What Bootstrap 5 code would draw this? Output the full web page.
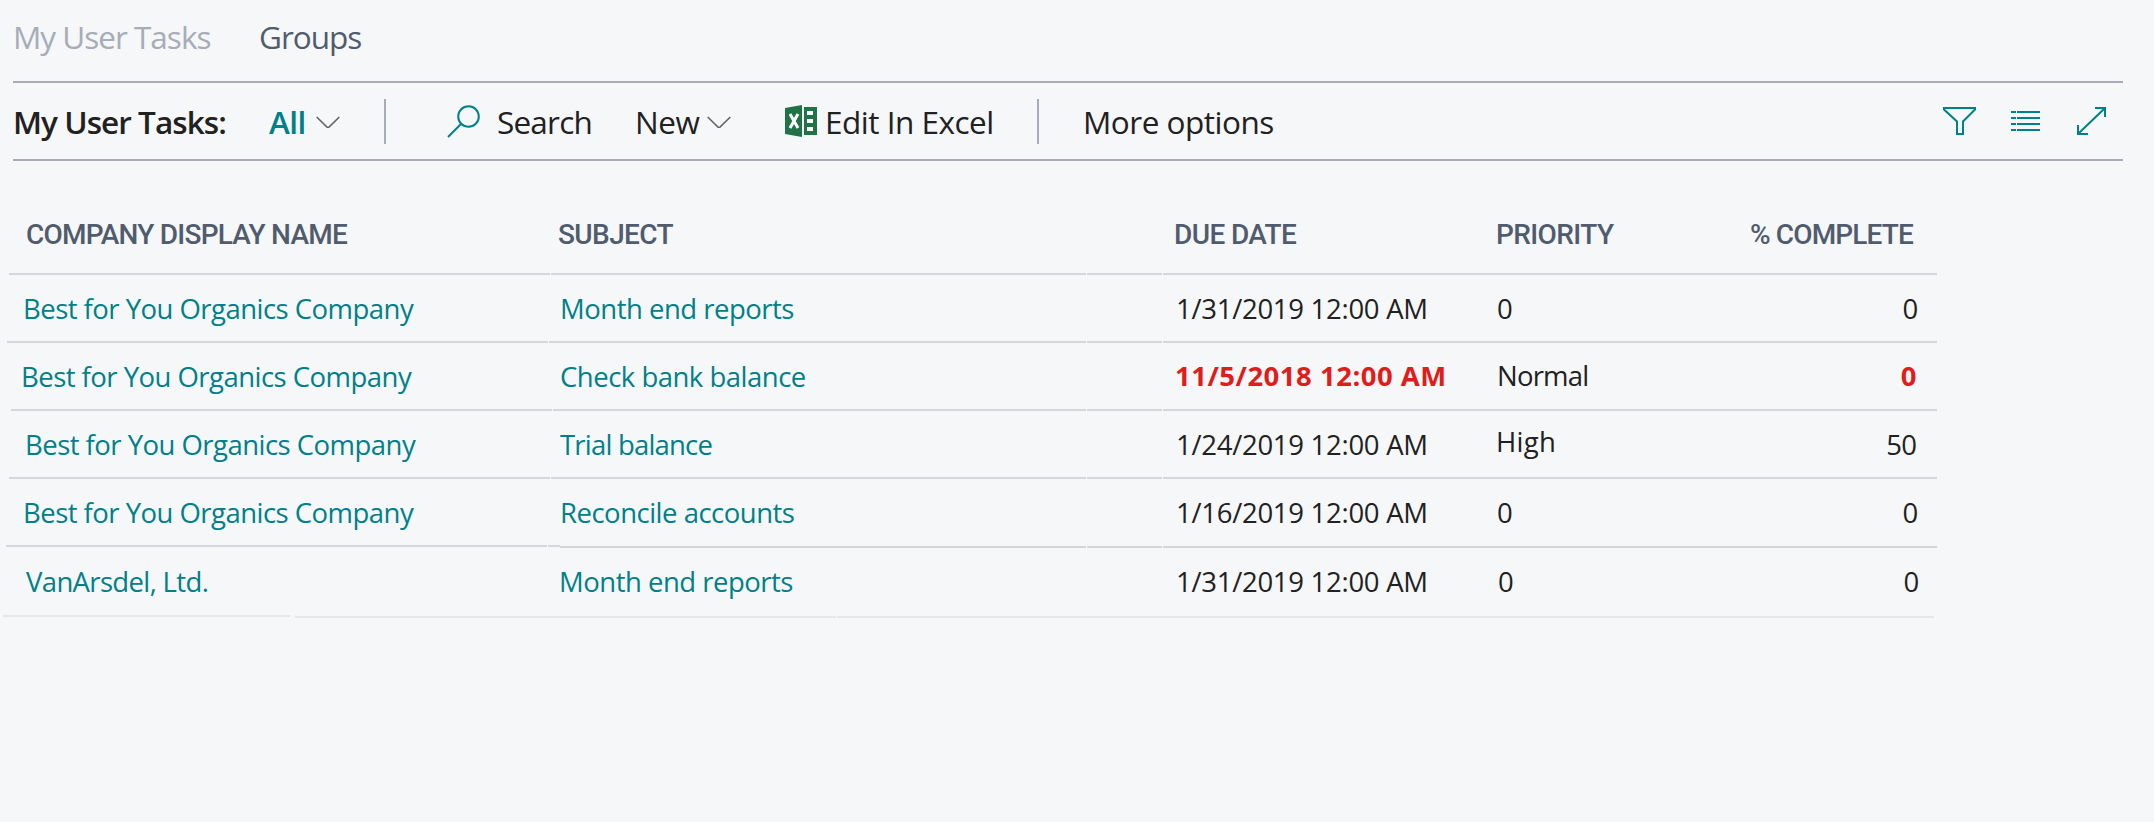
<!DOCTYPE html>
<html lang="en">
<head>
<meta charset="utf-8">
<title>My User Tasks</title>
<link rel="stylesheet" href="https://cdn.jsdelivr.net/npm/bootstrap@5.3.0/dist/css/bootstrap.min.css">
<style>
  body { background: #f6f7f9; color: #212121; font-family: "Open Sans", "Noto Sans", sans-serif; font-size: 27.5px; line-height: 40px; overflow: hidden; }
  a { text-decoration: none; }
  svg { display: block; }
  .page-tabs { height: 81px; padding: 15px 0 0 13px; font-size: 31.5px; line-height: 44px; }
  .page-tabs a { letter-spacing: -1px; color: #505c6d; }
  .page-tabs a:first-child { width: 246px; color: #a6adb8; }
  .action-bar { display: grid; grid-template-columns: 256px 47px 68px 63px 50px 138px 72px 78px 40px 212px 46px 860px 68px 66px 1fr; width: 2110px; height: 80px; margin-left: 13px; border-top: 2px solid #a6adb9; border-bottom: 2px solid #a6adb9; align-items: center; font-size: 31.5px; line-height: 44px; white-space: nowrap; letter-spacing: -.5px; }
  .action-bar > span { padding-top: 1px; }
  .action-bar > .bar-title { font-weight: 600; letter-spacing: -.95px; }
  .action-bar > .search-label { letter-spacing: -.8px; }
  .teal { color: #008089; }
  .sep { width: 2px; height: 45px; background: #a6adb9; }
  .task-list { width: 1937px; white-space: nowrap; }
  .list-head { height: 112px; padding-top: 54px; display: grid; grid-template-columns: 532px 616px 322px 1fr auto; padding-left: 26px; padding-right: 24px; font-family: Roboto, sans-serif; font-weight: 500; font-size: 28px; color: #505c6d; letter-spacing: -.6px; }
  .list-head span:first-child { letter-spacing: -.77px; }
  .list-head span:last-child { letter-spacing: -.85px; }
  .task { --start: 9px; height: 68px; padding-left: var(--start); gap: 1px; }
  .seg { border-top: 2px solid #d3d6dc; padding-top: 14px; }
  .seg-name { width: 541px; padding-left: 14px; letter-spacing: -.53px; }
  .seg-subject { padding-left: calc(18px - var(--start)); letter-spacing: -.5px; }
  .seg-spacer { width: 75px; }
  .seg-values { width: 774px; display: grid; grid-template-columns: 321px 1fr auto; padding-left: 13px; padding-right: 19px; letter-spacing: -.28px; }
  .task-2 { --start: 7px; }
  .task-3 { --start: 11px; }
  .task-5 { --start: 6px; height: 70px; }
  .task-5 .seg-name { padding: 15px 0 0 20px; letter-spacing: -.65px; }
  .task-5 .seg-stub { width: 12px; height: 2px; }
  .task-5 .seg-subject { padding-left: 0; margin-left: -2px; border: 0; padding-top: 16px; background: linear-gradient(#d3d6dc, #d3d6dc) 1px 0 / 100% 2px no-repeat; }
  .task-5 .seg:not(.seg-name):not(.seg-stub) { margin-top: 1px; }
  .task-5 .seg-values { grid-template-columns: 322px 1fr auto; padding-right: 18px; }
  .overdue { color: #e11d1c; font-weight: 700; letter-spacing: .5px; margin: -1px 0 0 -1px; }
  .overdue:last-child { margin-right: 1px; }
  .prio-normal { letter-spacing: -.8px; margin-top: -1px; }
  .prio-high { letter-spacing: .3px; margin: -3px 0 0 -1px; }
  .tight { letter-spacing: -.8px; }
  .pct-50 { letter-spacing: -.9px; margin-right: 2px; }
  .foot-line { padding-left: 3px; }
  .foot-line div { height: 2px; background: #e5e7e9; }
  .foot-line .foot-a { width: 287px; margin-right: 5px; }
  .foot-line .foot-b { width: 541px; margin: 1px 1px 0 0; }
  .foot-line .foot-c { width: 1097px; margin-top: 1px; }
</style>
</head>
<body>
<nav class="page-tabs d-flex">
  <a href="#">My User Tasks</a>
  <a href="#">Groups</a>
</nav>

<div class="action-bar">
  <span class="bar-title">My User Tasks:</span>
  <span class="teal fw-semibold">All</span>
  <svg width="24" height="14" viewBox="0 0 24 14" fill="none" stroke="#666" stroke-width="1.7"><path d="M.7 3 12 14 23.3 3"/></svg>
  <div class="sep"></div>
  <svg width="34" height="34" viewBox="0 0 34 34" fill="none" stroke="#008089" stroke-width="2"><circle cx="21.5" cy="12.5" r="10.3"/><path d="M14 20 1 33"/></svg>
  <span class="search-label">Search</span>
  <span>New</span>
  <svg width="24" height="14" viewBox="0 0 24 14" fill="none" stroke="#666" stroke-width="1.7"><path d="M.7 3 12 14 23.3 3"/></svg>
  <svg width="33" height="34" viewBox="0 0 33 34"><path d="M0 4 17 1v32L0 30z" fill="#217346"/><path d="M19 3h13v28H19z" fill="#217346"/><path d="M22 7h6v4h-6zM22 15h6v4h-6zM22 23h6v4h-6z" fill="#fff"/><path d="m5 10 8 14M13 10 5 24" stroke="#fff" stroke-width="3" fill="none"/></svg>
  <span>Edit In Excel</span>
  <div class="sep"></div>
  <span>More options</span>
  <svg width="34" height="30" viewBox="0 0 34 30" fill="none" stroke="#008089" stroke-width="2"><path d="M1 2h31v1.5L20 15.500V28h-6V15.500L1 3.500z"/></svg>
  <svg width="30" height="22" viewBox="0 0 30 22" fill="none" stroke="#008089" stroke-width="2"><path d="M0 2h5m1 0h23M0 8h5m1 0h23M0 14h5m1 0h23M0 20h5m1 0h23"/></svg>
  <svg width="30" height="30" viewBox="0 0 30 30" fill="none" stroke="#008089" stroke-width="2"><path d="M18 2h10v9M1 19v9h10M28 2 1 28"/></svg>
</div>

<main class="task-list">
  <div class="list-head"><span>COMPANY DISPLAY NAME</span><span>SUBJECT</span><span>DUE DATE</span><span>PRIORITY</span><span>% COMPLETE</span></div>

  <div class="task d-flex">
    <div class="seg seg-name"><a href="#" class="teal">Best for You Organics Company</a></div>
    <div class="seg seg-subject flex-grow-1"><a href="#" class="teal">Month end reports</a></div>
    <div class="seg seg-spacer"></div>
    <div class="seg seg-values"><span>1/31/2019 12:00 AM</span><span>0</span><span>0</span></div>
  </div>
  <div class="task task-2 d-flex">
    <div class="seg seg-name"><a href="#" class="teal">Best for You Organics Company</a></div>
    <div class="seg seg-subject flex-grow-1"><a href="#" class="teal">Check bank balance</a></div>
    <div class="seg seg-spacer"></div>
    <div class="seg seg-values"><span class="overdue">11/5/2018 12:00 AM</span><span class="prio-normal">Normal</span><span class="overdue">0</span></div>
  </div>
  <div class="task task-3 d-flex">
    <div class="seg seg-name"><a href="#" class="teal">Best for You Organics Company</a></div>
    <div class="seg seg-subject flex-grow-1"><a href="#" class="teal tight">Trial balance</a></div>
    <div class="seg seg-spacer"></div>
    <div class="seg seg-values"><span>1/24/2019 12:00 AM</span><span class="prio-high">High</span><span class="pct-50">50</span></div>
  </div>
  <div class="task d-flex">
    <div class="seg seg-name"><a href="#" class="teal">Best for You Organics Company</a></div>
    <div class="seg seg-subject flex-grow-1"><a href="#" class="teal">Reconcile accounts</a></div>
    <div class="seg seg-spacer"></div>
    <div class="seg seg-values"><span>1/16/2019 12:00 AM</span><span>0</span><span>0</span></div>
  </div>
  <div class="task task-5 d-flex">
    <div class="seg seg-name"><a href="#" class="teal">VanArsdel, Ltd.</a></div>
    <div class="seg seg-stub p-0"></div>
    <div class="seg seg-subject flex-grow-1"><a href="#" class="teal">Month end reports</a></div>
    <div class="seg seg-spacer"></div>
    <div class="seg seg-values"><span>1/31/2019 12:00 AM</span><span>0</span><span>0</span></div>
  </div>
  <div class="foot-line d-flex"><div class="foot-a"></div><div class="foot-b"></div><div class="foot-c"></div></div>
</main>
<script src="https://cdn.jsdelivr.net/npm/bootstrap@5.3.0/dist/js/bootstrap.bundle.min.js"></script>
</body>
</html>
